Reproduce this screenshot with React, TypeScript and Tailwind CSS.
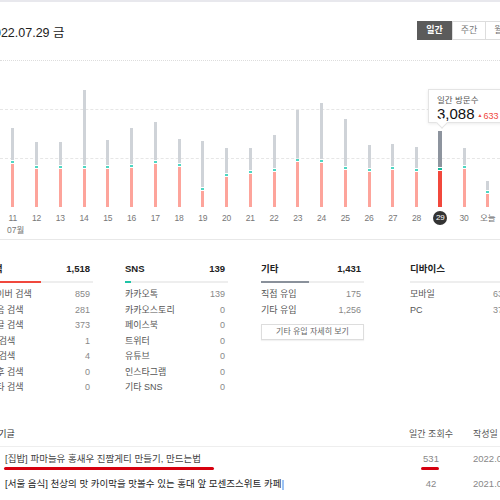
import React from 'react';

const font = { fontFamily: '"Liberation Sans", "Noto Sans CJK KR", sans-serif' };

// [label, gray top y, teal y] — baseline is y=208
const bars: [string, number, number][] = [
  ['11', 129, 162],
  ['12', 143, 167],
  ['13', 143, 167],
  ['14', 91, 167],
  ['15', 141, 167],
  ['16', 129, 166],
  ['17', 123, 162],
  ['18', 140, 165],
  ['19', 142, 189],
  ['20', 149, 175],
  ['21', 149, 172],
  ['22', 136, 170],
  ['23', 111, 160],
  ['24', 104, 161],
  ['25', 120, 168],
  ['26', 146, 170],
  ['27', 145, 168],
  ['28', 148, 170],
  ['29', 132, 169],
  ['30', 149, 167],
  ['오늘', 182, 192],
];

const BASE = 208;

function Bar({ top, teal, active }: { top: number; teal: number; active: boolean }) {
  const gray = teal - top - 1;
  const red = BASE - (teal + 3);
  return (
    <div className={`flex flex-col ${active ? 'w-[4px]' : 'w-[3px]'}`}>
      <div style={{ height: gray }} className={active ? 'bg-[#8d949e]' : 'bg-[#cfd3d8]'} />
      <div className="h-[0.5px]" />
      <div className={`h-[2.5px] ${active ? 'bg-[#16b99b]' : 'bg-[#4fd6c2]'}`} />
      <div className="h-[1px]" />
      <div style={{ height: red }} className={active ? 'bg-[#f2483c]' : 'bg-[#fda49b]'} />
    </div>
  );
}

interface Stat {
  title: string;
  total?: string;
  fill: number;
  fillColor: string;
  rows: [string, string][];
}

function StatColumn({ stat, width, className = '', titleClass = '', children }: { stat: Stat; width: string; className?: string; titleClass?: string; children?: React.ReactNode }) {
  return (
    <div className={`${width} shrink-0 ${className}`}>
      <div className="flex h-[16px] items-center justify-between pr-[3px] text-[9.5px] font-semibold text-[#222]">
        <span className={titleClass}>{stat.title}</span>
        <span>{stat.total}</span>
      </div>
      <div className="mt-[4px] h-[2px] bg-[#eeeeee]">
        <div className={`h-full ${stat.fillColor}`} style={{ width: stat.fill }} />
      </div>
      <div className="mt-[4px]">
        {stat.rows.map(([label, value]) => (
          <div key={label} className="flex h-[15.5px] items-center justify-between pr-[3px] text-[9px]">
            <span className="text-[#555]">{label}</span>
            <span className="text-[#888]">{value}</span>
          </div>
        ))}
      </div>
      {children}
    </div>
  );
}

const search: Stat = {
  title: '검색',
  total: '1,518',
  fill: 53,
  fillColor: 'bg-[#f0483d]',
  rows: [
    ['네이버 검색', '859'],
    ['다음 검색', '281'],
    ['구글 검색', '373'],
    ['줌 검색', '1'],
    ['빙 검색', '4'],
    ['야후 검색', '0'],
    ['기타 검색', '0'],
  ],
};

const sns: Stat = {
  title: 'SNS',
  total: '139',
  fill: 6,
  fillColor: 'bg-[#1fc3a6]',
  rows: [
    ['카카오톡', '139'],
    ['카카오스토리', '0'],
    ['페이스북', '0'],
    ['트위터', '0'],
    ['유튜브', '0'],
    ['인스타그램', '0'],
    ['기타 SNS', '0'],
  ],
};

const etc: Stat = {
  title: '기타',
  total: '1,431',
  fill: 48,
  fillColor: 'bg-[#8a919b]',
  rows: [
    ['직접 유입', '175'],
    ['기타 유입', '1,256'],
  ],
};

const device: Stat = {
  title: '디바이스',
  fill: 0,
  fillColor: 'bg-[#8a919b]',
  rows: [
    ['모바일', '63%'],
    ['PC', '37%'],
  ],
};

const posts: [string, string, string, boolean][] = [
  ['[집밥] 파마늘유 홍새우 진짬게티 만들기, 만드는법', '531', '2022.07.29', true],
  ['[서울 음식] 천상의 맛 카이막을 맛볼수 있는 홍대 앞 모센즈스위트 카페', '42', '2021.04.11', false],
];

export default function App() {
  return (
    <div className="relative h-[500px] w-[500px] overflow-hidden bg-white" style={font}>
      <div className="h-[2px] bg-[#e8e8ed]" />

      {/* Header */}
      <div className="flex h-[59px] items-start justify-between border-b border-dotted border-[#dddddd]">
        <div className="-ml-[13px] pt-[24px] text-[12.5px] leading-[15px] text-[#222]">2022.07.29 금</div>
        <div className="-mr-[20px] mt-[19px] flex text-[9px]">
          <div className="flex h-[19px] w-[35px] items-center justify-center bg-[#5b5b5b] font-bold text-white">일간</div>
          <div className="flex h-[19px] w-[34px] items-center justify-center border border-[#dddddd] text-[#777]">주간</div>
          <div className="flex h-[19px] w-[34px] items-center justify-center border border-l-0 border-[#dddddd] text-[#777]">월간</div>
        </div>
      </div>

      {/* Chart */}
      <div className="relative h-[146px]">
        <div className="absolute left-0 right-0 top-[48px] border-t border-dashed border-[#e6e6e6]" />
        <div className="absolute left-0 right-0 top-[97px] border-t border-dashed border-[#e6e6e6]" />
        <div className="relative flex h-full items-end pl-[1px]">
          {bars.map(([label, top, teal]) => (
            <div key={label} className="flex w-[23.75px] justify-center">
              <Bar top={top} teal={teal} active={label === '29'} />
            </div>
          ))}
        </div>

        {/* Tooltip */}
        <div className="absolute left-[428px] top-[28px] h-[34px] w-[100px] border border-[#e4e4e4] bg-white shadow-[0_1px_3px_rgba(0,0,0,0.08)]">
          <div className="pl-[8px] pt-[5px] text-[8.5px] leading-[10px] text-[#555]">일간 방문수</div>
          <div className="flex items-baseline pl-[8px]">
            <span className="text-[15px] leading-[17px] text-[#111]">3,088</span>
            <span className="ml-[3px] text-[9px] text-[#f0483d]">
              <span className="mr-[1px] text-[5px] align-[2px]">▲</span>633
            </span>
          </div>
          <div className="absolute -bottom-[5px] left-[9px] h-[8px] w-[8px] rotate-45 border-b border-r border-[#e4e4e4] bg-white" />
        </div>
      </div>

      {/* X labels */}
      <div className="mt-[4px] flex h-[14px] pl-[1px] text-[8.5px] text-[#777]">
        {bars.map(([label]) => (
          <div key={label} className="flex w-[23.75px] items-center justify-center">
            {label === '29' ? (
              <span className="flex h-[14px] w-[14px] items-center justify-center rounded-full bg-[#333] text-[8px] text-white">29</span>
            ) : (
              label
            )}
          </div>
        ))}
      </div>
      <div className="h-[10px] pl-[7px] text-[8.5px] leading-[10px] text-[#777]">07월</div>

      {/* Inflow stats */}
      <div className="mt-[4px] flex h-[179px] border-t border-[#e8e8e8] pt-[21px]">
        <StatColumn stat={search} width="w-[105px]" className="-ml-[12px]" titleClass="-ml-[3px]" />
        <StatColumn stat={sns} width="w-[103px]" className="ml-[32px]" />
        <StatColumn stat={etc} width="w-[103px]" className="ml-[33px]">
          <div className="mt-[6px] flex h-[16px] items-center justify-center border border-[#dddddd] text-[8px] text-[#666] shadow-[0_1px_1px_rgba(0,0,0,0.05)]">
            기타 유입 자세히 보기
          </div>
        </StatColumn>
        <StatColumn stat={device} width="w-[104px]" className="ml-[46px]" />
      </div>

      {/* Popular posts */}
      <div className="w-[533px]">
        <div className="flex h-[29px] items-end border-b border-[#eeeeee] pb-[5px] text-[9px] leading-[14px]">
          <div className="-ml-[10px] flex-1 text-[#333]">인기글</div>
          <div className="w-[60px] text-center text-[#555]">일간 조회수</div>
          <div className="ml-[12px] w-[60px] text-[#555]">작성일</div>
        </div>
        {posts.map(([title, views, date, marked]) => (
          <div key={title} className="flex h-[25px] items-center text-[9.5px]">
            <div className="relative min-w-0 flex-1 whitespace-nowrap pl-[5px]">
              <span className={marked ? 'text-[#444]' : 'text-[#222]'}>{title}</span>
              {!marked && <span className="ml-[1px] inline-block h-[10px] w-[2px] bg-[#9cc3f5] align-middle" />}
              {marked && <div className="absolute left-[4px] top-[15px] h-[3px] w-[210px] rounded-full bg-[#d6000f]" />}
            </div>
            <div className="relative w-[60px] text-center text-[#888]">
              {views}
              {marked && <div className="absolute left-[20px] top-[15px] h-[3px] w-[18px] rounded-full bg-[#d6000f]" />}
            </div>
            <div className="ml-[12px] w-[60px] whitespace-nowrap text-[#888]">{date}</div>
          </div>
        ))}
      </div>
    </div>
  );
}
